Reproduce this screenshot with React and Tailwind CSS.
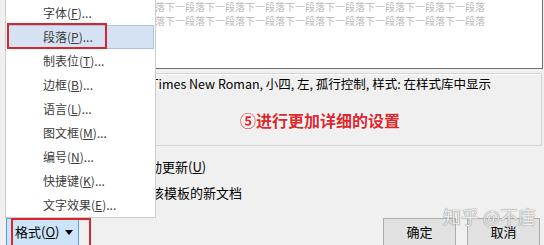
import { useState } from "react";

const menuItems = [
    { label: "字体", key: "F" },
    { label: "段落", key: "P" },
    { label: "制表位", key: "T" },
    { label: "边框", key: "B" },
    { label: "语言", key: "L" },
    { label: "图文框", key: "M" },
    { label: "编号", key: "N" },
    { label: "快捷键", key: "K" },
    { label: "文字效果", key: "E" },
];

const previewLine = "下一段落".repeat(12);

export default function App() {
    const [active] = useState(1);

    return (
        <div
            className="relative w-[544px] h-[245px] overflow-hidden bg-[#f0f0f0] text-black"
            style={{ fontFamily: '"Noto Sans CJK SC", "Noto Sans", sans-serif' }}
        >
            {/* Dialog body */}
            <div className="flex flex-col pl-[140px] pr-[1px]">
                {/* Preview */}
                <div className="h-[69px] bg-white border-r border-b border-[#707070] flex flex-col pr-[57px] overflow-hidden text-[10px] leading-[14px] text-[#b8b8b8]">
                    <div className="whitespace-nowrap flex justify-end">{previewLine}</div>
                    <div className="whitespace-nowrap flex justify-end">{previewLine}</div>
                </div>

                {/* Description */}
                <div className="mt-[4px] mr-px h-[73px] border border-[#d4d4d4] shadow-[inset_1px_1px_0_#ffffff] flex flex-col">
                    <div className="pl-[10px] pt-px text-[12.5px] leading-[18px] whitespace-nowrap">
                        Times New Roman, 小四, 左, 孤行控制, 样式: 在样式库中显示
                    </div>
                    <div
                        className="mt-[16px] pl-[99px] text-[16px] leading-[22px] font-bold text-[#e0262b] whitespace-nowrap"
                        style={{ textShadow: "0 0 2px #fff, 0 0 2px #fff, 0 0 3px #fff" }}
                    >
                        ⑤进行更加详细的设置
                    </div>
                </div>

                {/* Options */}
                <div className="mt-[11px] flex flex-col gap-[6px] text-[13px] leading-[20px]">
                    <div className="whitespace-nowrap -ml-[4px]">
                        自动更新(<u>U</u>)
                    </div>
                    <div className="whitespace-nowrap -ml-[15px]">基于该模板的新文档</div>
                </div>
            </div>

            {/* Bottom row */}
            <div className="mt-[15px] flex items-start justify-between pl-[6px] pr-[4px]">
                <div className="w-[73px] h-[30px] bg-[#cce4f7] border border-[#569de5] flex items-start pt-[4px] pl-[8px] gap-[6px] text-[13px] leading-[18px]">
                    <span>
                        格式(<u>O</u>)
                    </span>
                    <svg width="8" height="5" viewBox="0 0 8 5" className="mt-[7px]">
                        <path d="M0 0 H8 L4 5 Z" fill="#000" />
                    </svg>
                </div>
                <div className="flex gap-[11px]">
                    <button className="w-[73px] h-[30px] bg-[#e1e1e1] border border-[#adadad] text-[13px] leading-[18px] pb-[2px]">
                        确定
                    </button>
                    <button className="w-[73px] h-[30px] bg-[#e1e1e1] border border-[#adadad] text-[13px] leading-[18px] pb-[2px]">
                        取消
                    </button>
                </div>
            </div>

            {/* Dropdown menu */}
            <div className="absolute left-[5px] top-[-1px] w-[151px] bg-white border border-[#cccccc] pt-px px-[1px] flex flex-col">
                {menuItems.map((item, i) => (
                    <div
                        key={item.key}
                        className={
                            "h-[24px] pl-[35px] flex items-center text-[12px] text-[#3c3c3c] whitespace-nowrap border " +
                            (i === active ? "bg-[#d5e2f3] border-[#a9c3e6]" : "border-transparent")
                        }
                    >
                        {item.label}(<u>{item.key}</u>)...
                    </div>
                ))}
            </div>

            {/* Red annotation boxes */}
            <div className="absolute left-[7px] top-[23px] w-[100px] h-[26px] border-2 border-[#d7262d]" />
            <div className="absolute left-[11px] top-[218px] w-[80px] h-[30px] border-2 border-[#d7262d]" />

            {/* Watermark */}
            <div
                className="absolute left-[443px] top-[205px] text-[18px] leading-[22px] text-[#ececec] whitespace-nowrap"
                style={{ textShadow: "0 0 1px #8a8a8a, 0 0 1px #8a8a8a" }}
            >
                知乎 @不唐
            </div>
        </div>
    );
}
